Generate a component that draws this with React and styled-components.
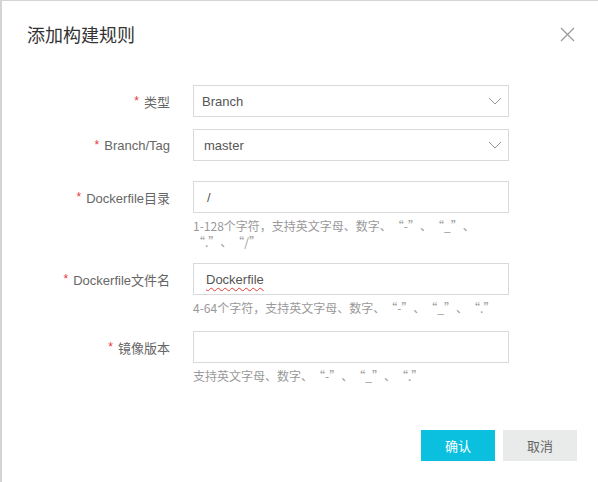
import React from "react";
import styled, { createGlobalStyle } from "styled-components";

const GlobalStyle = createGlobalStyle`
  html, body {
    margin: 0;
    padding: 0;
    background: #d4d4d4;
    font-family: "Liberation Sans", "Noto Sans CJK SC", sans-serif;
  }
`;

const Modal = styled.div`
  margin: 1px 0 0 2px;
  width: 596px;
  height: 481px;
  background: #fff;
  display: flex;
  flex-direction: column;
  box-sizing: border-box;
`;

const Header = styled.div`
  height: 66px;
  display: flex;
  align-items: center;
  justify-content: space-between;
  padding: 0 23px 0 25px;
  box-sizing: border-box;
`;

const Title = styled.h3`
  margin: 0;
  font-size: 18px;
  font-weight: 400;
  color: #333;
  font-family: "Noto Sans CJK SC", sans-serif;
`;

const Close = styled.button`
  border: none;
  background: none;
  padding: 0;
  width: 15px;
  height: 15px;
  display: flex;
  cursor: pointer;
`;

const Form = styled.div`
  display: flex;
  flex-direction: column;
  padding-top: 18px;
`;

const Item = styled.div`
  display: flex;
  align-items: flex-start;
  margin-bottom: ${(p) => p.$gap}px;
`;

const Label = styled.div`
  width: 168px;
  height: 32px;
  display: flex;
  align-items: center;
  justify-content: flex-end;
  font-size: 13px;
  color: #666;
  margin-right: 23px;
  white-space: nowrap;
`;

const Star = styled.span`
  color: #e83a3a;
  margin-right: 5px;
  font-size: 12px;
`;

const Control = styled.div`
  width: 316px;
  display: flex;
  flex-direction: column;
`;

const Field = styled.div`
  height: 32px;
  border: 1px solid #d9d9d9;
  box-sizing: border-box;
  display: flex;
  align-items: center;
  justify-content: space-between;
  padding: 0 6px 0 ${(p) => p.$pad || 10}px;
  font-size: 13px;
  color: #555;
`;

const Misspelled = styled.span`
  text-decoration: underline wavy #e53935;
  text-decoration-thickness: 1px;
  text-underline-offset: 3px;
`;

const Help = styled.div`
  margin-top: 5px;
  width: ${(p) => p.$width || 316}px;
  font-size: 12px;
  line-height: 16px;
  color: #999;
  font-family: "Noto Sans CJK SC", sans-serif;
`;

// full-width curly quote cell, ink pushed toward the quoted text
const Quote = styled.span`
  display: inline-block;
  width: 12px;
  text-align: ${(p) => (p.$open ? "right" : "left")};
`;

const Footer = styled.div`
  display: flex;
  justify-content: flex-end;
  gap: 8px;
  padding: 0 21px 0 0;
`;

const Button = styled.button`
  width: 74px;
  height: 31px;
  border: none;
  font-size: 13px;
  font-family: "Noto Sans CJK SC", sans-serif;
  cursor: pointer;
  background: ${(p) => (p.$primary ? "#0bc0df" : "#e9eaea")};
  color: ${(p) => (p.$primary ? "#fff" : "#666")};
`;

const Chevron = () => (
  <svg width="14" height="8" viewBox="0 0 14 8">
    <path d="M1 1l6 6 6-6" fill="none" stroke="#999" strokeWidth="1" />
  </svg>
);

const withQuotes = (text) =>
  text.split(/([“”])/).map((part, i) =>
    part === "“" || part === "”" ? (
      <Quote key={i} $open={part === "“"}>{part}</Quote>
    ) : (
      part
    )
  );

export default function App() {
  return (
    <>
      <GlobalStyle />
      <Modal>
        <Header>
          <Title>添加构建规则</Title>
          <Close aria-label="close">
            <svg width="15" height="15" viewBox="0 0 15 15">
              <path d="M1 1l13 13M14 1L1 14" stroke="#999" strokeWidth="1.2" fill="none" />
            </svg>
          </Close>
        </Header>
        <Form>
          <Item $gap={12}>
            <Label><Star>*</Star>类型</Label>
            <Control>
              <Field $pad={8}>Branch<Chevron /></Field>
            </Control>
          </Item>
          <Item $gap={20}>
            <Label><Star>*</Star>Branch/Tag</Label>
            <Control>
              <Field>master<Chevron /></Field>
            </Control>
          </Item>
          <Item $gap={13}>
            <Label><Star>*</Star>Dockerfile目录</Label>
            <Control>
              <Field $pad={13}>/</Field>
              <Help $width={288}>{withQuotes("1-128个字符，支持英文字母、数字、“-”、“_”、“.”、“/”")}</Help>
            </Control>
          </Item>
          <Item $gap={15}>
            <Label><Star>*</Star>Dockerfile文件名</Label>
            <Control>
              <Field $pad={12}><Misspelled>Dockerfile</Misspelled></Field>
              <Help>{withQuotes("4-64个字符，支持英文字母、数字、“-”、“_”、“.”")}</Help>
            </Control>
          </Item>
          <Item $gap={46}>
            <Label><Star>*</Star>镜像版本</Label>
            <Control>
              <Field />
              <Help>{withQuotes("支持英文字母、数字、“-”、“_”、“.”")}</Help>
            </Control>
          </Item>
        </Form>
        <Footer>
          <Button $primary>确认</Button>
          <Button>取消</Button>
        </Footer>
      </Modal>
    </>
  );
}
